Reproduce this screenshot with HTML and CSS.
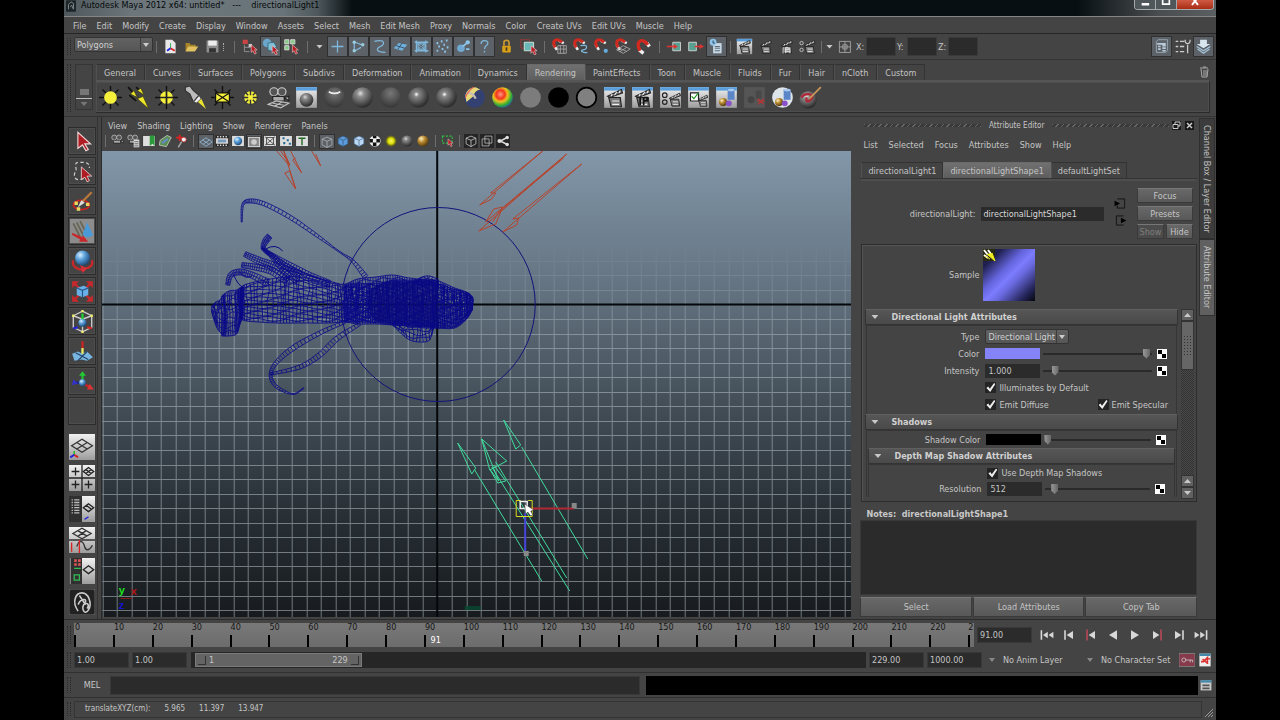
FILE: index.html
```html
<!DOCTYPE html>
<html lang="en">
<head>
<meta charset="utf-8">
<title>Autodesk Maya 2012 x64: untitled*</title>
<link rel="stylesheet" href="styles.css">
</head>
<body>
<svg class="defs" aria-hidden="true">
  <defs>
    <radialGradient id="gGray" cx=".4" cy=".3" r=".7"><stop offset="0" stop-color="#ddd"/><stop offset=".25" stop-color="#8c8c8c"/><stop offset="1" stop-color="#2a2a2a"/></radialGradient>
    <radialGradient id="gFlat" cx=".5" cy=".3" r=".8"><stop offset="0" stop-color="#777"/><stop offset="1" stop-color="#2c2c2c"/></radialGradient>
    <radialGradient id="gSpot" cx=".4" cy=".35" r=".6"><stop offset="0" stop-color="#fff"/><stop offset=".2" stop-color="#888"/><stop offset="1" stop-color="#303030"/></radialGradient>
    <radialGradient id="gRamp" cx=".4" cy=".35" r=".7"><stop offset="0" stop-color="#ff9a80"/><stop offset=".3" stop-color="#f4341c"/><stop offset=".5" stop-color="#f0c020"/><stop offset=".75" stop-color="#35b030"/><stop offset="1" stop-color="#2050b0"/></radialGradient>
    <radialGradient id="gBlue" cx=".35" cy=".3" r=".8"><stop offset="0" stop-color="#d8f0ff"/><stop offset=".4" stop-color="#5a9fd8"/><stop offset="1" stop-color="#123a68"/></radialGradient>
    <radialGradient id="gGold" cx=".35" cy=".3" r=".8"><stop offset="0" stop-color="#fff0c0"/><stop offset=".4" stop-color="#b88a30"/><stop offset="1" stop-color="#3c2808"/></radialGradient>
    <radialGradient id="gYel"><stop offset="0" stop-color="#f8f860"/><stop offset=".5" stop-color="#d8d800"/><stop offset="1" stop-color="#555500" stop-opacity="0"/></radialGradient>
    <linearGradient id="gSky" x2="0" y2="1"><stop offset="0" stop-color="#8297a9"/><stop offset=".3" stop-color="#637280"/><stop offset=".55" stop-color="#424d56"/><stop offset=".8" stop-color="#262d33"/><stop offset="1" stop-color="#171b1e"/></linearGradient>
    <linearGradient id="gFade" gradientUnits="userSpaceOnUse" x1="0" y1="240" x2="0" y2="340"><stop offset="0" stop-color="#fff" stop-opacity="0"/><stop offset=".4" stop-color="#fff" stop-opacity=".4"/><stop offset="1" stop-color="#fff"/></linearGradient>
    <mask id="mFade" maskUnits="userSpaceOnUse" x="-200" y="0" width="1500" height="800"><rect x="-200" y="0" width="1500" height="800" fill="url(#gFade)"/></mask>
    <linearGradient id="gBtn" x2="0" y2="1"><stop offset="0" stop-color="#f2f2f2"/><stop offset="1" stop-color="#9c9c9c"/></linearGradient>
  </defs>
</svg>
<div class="app">
  <header class="title">
    <svg class="logo" viewBox="0 0 12 14" aria-hidden="true"><rect width="12" height="14" rx="1" fill="#1d2528"/><path d="M3 11V5l3-3 3 2v7M5 8l2-2 1 4" fill="none" stroke="#89969b"/></svg>
    <h1>Autodesk Maya 2012 x64: untitled* &nbsp; --- &nbsp;&nbsp; directionalLight1</h1>
    <div class="winctl"><button aria-label="Minimize"><svg viewBox="0 0 24 10"><path d="M8 4h9" stroke="#fff" stroke-width="3"/></svg></button><button aria-label="Maximize"><svg viewBox="0 0 24 10"><path d="M8-3h8v7H8z" fill="none" stroke="#fff" stroke-width="2"/></svg></button><button class="x" aria-label="Close"><svg viewBox="0 0 36 10"><path d="M15-3l6 8m0-8l-6 8" stroke="#fff" stroke-width="2"/></svg></button></div>
  </header>
  <nav class="menu main-menu"><button>File</button><button>Edit</button><button>Modify</button><button>Create</button><button>Display</button><button>Window</button><button>Assets</button><button>Select</button><button>Mesh</button><button>Edit Mesh</button><button>Proxy</button><button>Normals</button><button>Color</button><button>Create UVs</button><button>Edit UVs</button><button>Muscle</button><button>Help</button></nav>

  <section class="status-line">
    <span class="grip"></span>
    <span class="pick mode"><select aria-label="Menu set"><option>Polygons</option></select></span>
    <div class="icons" data-icons="sepn new open save chev sep selHier *selObj selComp sep tri *plus *joints *curve *surf *lattice *dots *rend *help gap lock gap hilite sep magGrid magCurve magPoint magPlane mag sep inConn outConn *history sepn renderView clap ipr rset sepn trin cross"></div>
    <label for="cx">X:</label><input id="cx" class="coord"><label for="cy">Y:</label><input id="cy" class="coord"><label for="cz">Z:</label><input id="cz" class="coord">
    <div class="icons push" data-icons="*attrPanel toolPanel *chanPanel"></div>
  </section>

  <section class="shelf">
    <span class="grip"></span>
    <div class="shelf-side"><i class="box"></i><i class="line"></i><i class="down"></i></div>
    <div class="shelf-body">
      <div class="tabs shelf-tabs"><button>General</button><button>Curves</button><button>Surfaces</button><button>Polygons</button><button>Subdivs</button><button>Deformation</button><button>Animation</button><button>Dynamics</button><button class="on">Rendering</button><button>PaintEffects</button><button>Toon</button><button>Muscle</button><button>Fluids</button><button>Fur</button><button>Hair</button><button>nCloth</button><button>Custom</button>
        <button class="trash" aria-label="Delete"><svg viewBox="0 0 12 14"><path d="M2 3h8M5 2h3M3 4l1 8h5l1-8M6 5v6M8 5v6" fill="none" stroke="#aaa"/></svg></button></div>
      <div class="icons shelf-icons" data-icons="sun dirLight pointLight spot area volume camera renderBall aniso blinn lambert phong phong layered ramp surfShader black useBg clapW iprW rsetW batchW hyper dimmed hyperRound paint"></div>
    </div>
  </section>

  <main>
    <aside class="toolbox">
      <div class="tools" data-icons="arrow lasso brush +move rotate scale manip soft axes blank"></div>
      <div class="layouts" data-icons="persp four outl graph hyperP mel"></div>
    </aside>

    <section class="panel">
      <nav class="menu"><button>View</button><button>Shading</button><button>Lighting</button><button>Show</button><button>Renderer</button><button>Panels</button></nav>
      <div class="icons panel-icons" data-icons="sepn cam camAttr bookmark imgPlane pan sep *gridI film ballBox *gate xbox pts tbox sep *wire cubeB cubeW checker yel gray gold sep selGreen sepn cubeO twoBox share"></div>
      <svg id="scene" class="scene" viewBox="102 151 750 466" preserveAspectRatio="xMidYMid slice" role="img" aria-label="Perspective view"></svg>
    </section>

    <section class="attr">
      <div class="dock"><i></i><h2>Attribute Editor</h2><i></i>
        <button aria-label="Undock"><svg viewBox="0 0 9 9"><path d="M3 3V1h5v4H6M1 3.500h5v4H1z" fill="none" stroke="#ccc"/></svg></button><button aria-label="Close"><svg viewBox="0 0 9 9"><path d="M2 2l5 5m0-5L2 7" stroke="#ccc" stroke-width="1.500"/></svg></button></div>
      <nav class="menu"><button>List</button><button>Selected</button><button>Focus</button><button>Attributes</button><button>Show</button><button>Help</button></nav>
      <div class="tabs attr-tabs"><button>directionalLight1</button><button class="on">directionalLightShape1</button><button>defaultLightSet</button></div>
      <div class="node">
        <label for="nm">directionalLight:</label><input id="nm" value="directionalLightShape1">
        <div class="conn"><button aria-label="Input connection"><svg viewBox="0 0 13 12"><path d="M3 1h8v10H3V8" fill="none" stroke="#111"/><path d="M0 3l6 3-6 3z" fill="#000"/></svg></button><button aria-label="Output connection"><svg viewBox="0 0 13 12"><path d="M10 1H2v10h8" fill="none" stroke="#111"/><path d="M7 3l6 3-6 3z" fill="#000"/></svg></button></div>
        <div class="node-btns"><button class="btn">Focus</button><button class="btn">Presets</button><button class="btn" disabled>Show</button><button class="btn">Hide</button></div>
      </div>
      <div class="frame">
        <div class="sample"><span>Sample</span><div class="swatch"><svg viewBox="0 0 14 14"><path d="M0 0h12v12H0z" fill="#2a2a10"/><path d="M1 1l4 5M5 1l3 4M1 6l4 3" stroke="#fff" stroke-width="2"/><path d="M4 5l8 7-3-8M2 7l5 3" fill="#ee2" stroke="#ee2"/></svg></div></div>
        <div class="scroller">
          <div class="sections">
            <h3><i class="down"></i>Directional Light Attributes</h3>
            <div class="body">
              <div class="row"><label for="ty">Type</label><span class="pick type"><select id="ty"><option>Directional Light</option></select></span></div>
              <div class="row"><label for="co">Color</label><span class="chip blue"></span><input id="co" type="range" value="98"><button class="map" aria-label="Map color"></button></div>
              <div class="row"><label for="it">Intensity</label><input id="it" class="num" value="1.000"><input type="range" value="8" aria-label="Intensity slider"><button class="map" aria-label="Map intensity"></button></div>
              <div class="row"><label class="chk"><input type="checkbox" checked>Illuminates by Default</label></div>
              <div class="row"><label class="chk"><input type="checkbox" checked>Emit Diffuse</label><label class="chk second"><input type="checkbox" checked>Emit Specular</label></div>
            </div>
            <h3><i class="down"></i>Shadows</h3>
            <div class="body shadows">
              <div class="row"><label for="sc">Shadow Color</label><span class="chip"></span><input id="sc" type="range" value="0"><button class="map" aria-label="Map shadow color"></button></div>
              <h3><i class="down"></i>Depth Map Shadow Attributes</h3>
              <div class="body last">
                <div class="row"><label class="chk"><input type="checkbox" checked>Use Depth Map Shadows</label></div>
                <div class="row"><label for="rs">Resolution</label><input id="rs" class="num" value="512"><input type="range" value="6" aria-label="Resolution slider"><button class="map" aria-label="Map resolution"></button></div>
              </div>
            </div>
          </div>
          <div class="scroll"><button aria-label="Up"><i class="up"></i></button><span class="thumb"></span><span class="track"></span><button aria-label="Page up"><i class="up"></i></button><button aria-label="Down"><i class="down"></i></button></div>
        </div>
      </div>
      <label class="notes" for="nt">Notes:&nbsp; directionalLightShape1</label>
      <textarea id="nt"></textarea>
      <div class="foot"><button class="btn">Select</button><button class="btn">Load Attributes</button><button class="btn">Copy Tab</button></div>
    </section>
    <aside class="vtabs"><button>Channel Box / Layer Editor</button><button class="on">Attribute Editor</button></aside>
  </main>

  <section class="timeline">
    <span class="grip"></span>
    <div class="ruler" id="ruler"></div>
    <input class="dark now" value="91.00" aria-label="Current time">
    <div class="play" data-icons="p1 p2 p3 p4 p5 p6 p7 p8"></div>
  </section>
  <section class="range">
    <span class="grip"></span>
    <input class="dark" value="1.00" aria-label="Animation start"><input class="dark" value="1.00" aria-label="Range start">
    <div class="bar"><div class="handle"><i></i><span>1</span><span>229</span><i></i></div></div>
    <input class="dark" value="229.00" aria-label="Range end"><input class="dark" value="1000.00" aria-label="Animation end">
    <button class="drop"><i class="down"></i>No Anim Layer</button><button class="drop set"><i class="down"></i>No Character Set</button>
    <div class="icons" data-icons="key prefs"></div>
  </section>
  <section class="cmd"><span class="grip"></span><label for="mel">MEL</label><input id="mel" class="dark"><output></output><div class="icons" data-icons="script"></div></section>
  <footer><span class="grip"></span><p><span>translateXYZ(cm):</span><span>5.965</span><span>11.397</span><span>13.947</span></p><svg viewBox="0 0 10 10"><path d="M1 9l8-8M4 9l5-5M7 9l2-2" stroke="#999"/></svg></footer>
</div>
<script src="script.js"></script>
</body>
</html>
```
FILE: styles.css
```css
* { box-sizing: border-box; }
body { margin: 0; background: #000; color: #c4c4c4; font: 9px/12px "DejaVu Sans Condensed", "DejaVu Sans", sans-serif; }
button, input, select, textarea { font: inherit; color: inherit; margin: 0; padding: 0; border: 0; background: none; border-radius: 0; min-width: 0; }
button { white-space: nowrap; }
h1, h2, h3, p { margin: 0; font-size: inherit; font-weight: normal; }
.defs { position: absolute; width: 0; height: 0; }
svg { display: block; flex: none; }
.app { margin: 0 5%; min-height: 100vh; background: #444; display: flex; flex-direction: column; overflow: hidden; }

.title { display: flex; align-items: center; height: 17px; padding: 0 2px 5px; border-bottom: 1px solid #858585; color: #05090b;
  background: linear-gradient(90deg, #4e575b 0, #6d777b 6%, #69747a 19%, #4f595d 22%, #070f12 25%, #070f12 88%, #4a4d50 95%, #5a5f62 100%); }
.title h1 { font: 9px/11px "DejaVu Sans Condensed", "DejaVu Sans", sans-serif; white-space: pre; }
.logo { width: 10px; height: 12px; margin-right: 5px; }
.winctl { display: flex; margin-left: auto; height: 10px; align-self: flex-start; border: 1px solid #a4a9ac; border-top: 0; border-radius: 0 0 4px 4px; overflow: hidden; }
.winctl button { width: 21px; background: #50575b; border-right: 1px solid #a4a9ac; }
.winctl .x { width: 36px; background: linear-gradient(#d05a44, #a82c14); border: 0; }
.winctl svg { height: 10px; width: 100%; }

.menu { display: flex; gap: 10px; align-items: center; }
.main-menu { height: 17px; padding: 1px 9px 0; border-bottom: 1px solid #262626; }
.grip { flex: none; width: 4px; align-self: stretch; margin: 4px 3px; border: dotted #2a2a2a; border-width: 0 1px; }
.icons { display: flex; align-items: center; }
.icons button, .tools button, .layouts button, .play button { display: grid; place-items: center; flex: none; }
.icons svg { width: 17px; height: 17px; }
.pick { position: relative; display: flex; border: 1px solid #333; border-radius: 2px; background: linear-gradient(#626262, #565656); }
.pick select { appearance: none; width: 100%; padding-left: 2px; color: #d0d0d0; }
.pick::after { content: ""; position: absolute; right: 3px; top: 50%; margin-top: -2px; border: 3px solid transparent; border-top: 4px solid #ccc; border-bottom: 0; pointer-events: none; }
.pick::before { content: ""; position: absolute; right: 11px; top: 0; bottom: 0; border-left: 1px solid #3c3c3c; }

.status-line { display: flex; align-items: center; height: 26px; border-bottom: 1px solid #353535; }
.mode { width: 79px; height: 15px; margin-bottom: 4px; }
.status-line .icons button { width: 21px; height: 21px; }
.icons .sep { width: 10px; height: 12px; background: linear-gradient(#8a8a8a, #8a8a8a) center / 1px 100% no-repeat; flex: none; opacity: .6; }
.icons .narrow { width: 7px; }
.icons .tri { width: 15px; flex: none; display: grid; justify-items: center; }
.icons .tri.small { width: 9px; }
.icons .chev { width: 6px; height: 8px; flex: none; border-left: 1px dotted #aaa; }
.icons .gap { width: 1px; }
.icons .on { background: #5c6267; border: 1px solid #303030; }
.status-line label { margin-left: 1px; width: 10px; }
.coord { flex: 0 1 30px; width: 30px; height: 19px; background: #2b2b2b; border: 1px solid #3a3a3a; }
.push { margin-left: auto; padding-right: 2px; }

.shelf { display: flex; height: 57px; border-bottom: 1px solid #333; }
.shelf-side { width: 18px; margin: 4px 3px 6px 1px; border: 1px solid #353535; display: flex; flex-direction: column; align-items: center; justify-content: flex-end; gap: 3px; padding-bottom: 3px; }
.shelf-side .box { width: 9px; height: 6px; background: #777; }
.shelf-side .line { width: 16px; height: 1px; background: #bbb; }
.down, .up { display: block; width: 7px; height: 4px; background: #c8c8c8; clip-path: polygon(0 0, 100% 0, 50% 100%); }
.up { clip-path: polygon(50% 0, 100% 100%, 0 100%); }
.shelf-side .down { background: #777; }
.shelf-body { flex: 1; min-width: 0; padding: 4px 6px 0 0; }
.tabs { display: flex; align-items: stretch; }
.tabs button { border: 1px solid #333; border-left-color: #505050; border-bottom: 0; background: #434343; padding: 0 6px; }
.tabs .on { background: linear-gradient(#707070, #5e5e5e); border-color: #6a6a6a; }
.shelf-tabs { height: 16px; }
.shelf-tabs button { padding: 0 8px 0 7px; flex: 0 1 auto; }
.shelf-tabs .trash { margin-left: auto; background: none; border: 0; padding: 0; }
.trash svg { width: 12px; height: 14px; }
.shelf-icons { height: 33px; border: 1px solid #2b2b2b; border-left-width: 0; border-top: 2px solid #555; box-shadow: inset 0 0 0 1px #4e4e4e; }
.shelf-icons button { width: 28px; }
.shelf-icons svg { width: 23px; height: 23px; }

main { flex: 1; display: flex; min-height: 0; border-bottom: 1px solid #2b2b2b; }
.toolbox { width: 34px; padding: 10px 2px 0 4px; display: flex; flex-direction: column; gap: 8px; margin-right: 3px; border-right: 1px solid #333; }
.tools { display: flex; flex-direction: column; gap: 2px; }
.tools button { width: 28px; height: 28px; border: 1px solid #2c2c2c; box-shadow: inset 0 0 0 1px #4d4d4d; }
.tools .hot { background: #8c8c8c; }
.tools svg { width: 23px; height: 23px; }
.layouts { display: flex; flex-direction: column; gap: 4px; }
.layouts button { width: 28px; height: 27px; }
.layouts svg { width: 26px; height: 26px; }

.panel { flex: 1; min-width: 0; display: flex; flex-direction: column; padding: 1px 0 2px; border-left: 1px solid #2b2b2b; }
.panel .menu { height: 15px; padding: 0 6px; }
.panel-icons { height: 18px; padding-bottom: 2px; }
.panel-icons button { width: 16px; height: 15px; }
.panel-icons svg { width: 14px; height: 14px; }
.panel-icons .sep { width: 9px; }
.panel-icons .narrow { width: 7px; }
.scene { flex: 1 1 0; width: 100%; height: 0; min-height: 0; }
.scene text { font: bold 11px/11px "Liberation Sans", sans-serif; }

.attr { width: 30%; flex: none; padding: 0 0 2px 9px; display: flex; flex-direction: column; }
.dock { display: flex; align-items: center; gap: 8px; height: 17px; padding-left: 4px; font-size: 8px; }
.dock i { flex: 1; height: 3px; background: repeating-linear-gradient(135deg, #666 0 1px, #3a3a3a 1px 4px); }
.dock button { width: 9px; height: 9px; background: #181818; margin-left: -5px; }
.dock button + button { margin: 0 3px 0 -4px; }
.attr > .menu { height: 21px; padding-left: 3px; gap: 11px; }
.attr-tabs { height: 24px; padding: 7px 0 0 1px; border-bottom: 1px solid #333; box-shadow: 0 3px 0 -1px #4e4e4e; }
.attr-tabs button { flex: none; }
.node { display: flex; align-items: center; height: 65px; padding: 7px 4px 3px 0; }
.node label { width: 115px; text-align: right; }
.node input { flex: 1; margin: 0 10px 0 6px; height: 14px; background: #2b2b2b; padding-left: 2px; color: #d8d8d8; }
.conn { display: grid; gap: 6px; margin-bottom: 3px; }
.conn svg { width: 13px; height: 11px; }
.node-btns { display: grid; grid-template-columns: 1fr 1fr; gap: 3px 2px; width: 56px; margin-left: 10px; }
.node-btns .btn { height: 15px; }
.node-btns .btn:nth-child(-n+2) { grid-column: span 2; }
.btn { background: linear-gradient(#686868, #585858); border: 1px solid #3a3a3a; border-top-color: #777; }
.btn:disabled { color: #7e7e7e; background: #4c4c4c; }
.frame { flex: 1; min-height: 0; margin-left: 1px; border: 1px solid #2c2c2c; box-shadow: inset 1px 1px 0 #555; display: flex; flex-direction: column; padding: 4px 2px 2px 3px; }
.sample { display: flex; align-items: center; gap: 4px; height: 60px; padding-bottom: 8px; }
.sample span { width: 114px; text-align: right; }
.swatch { width: 52px; height: 52px; background: linear-gradient(315deg, #05060d 0, #25265a 15%, #6a6ae0 38%, #7c7cff 48%, #6464dc 60%, #1f2050 82%, #1a1b45 100%); }
.swatch svg { width: 14px; height: 14px; }
.scroller { flex: 1; min-height: 0; display: flex; gap: 3px; }
.sections { flex: 1; min-width: 0; overflow: hidden; }
h3 { display: flex; align-items: center; height: 16px; font-weight: bold; color: #d0d0d0; background: linear-gradient(#565656, #4a4a4a); border: 1px solid #333; border-top-color: #606060; padding-left: 5px; gap: 13px; }
.body { border: 1px solid #363636; border-bottom: 0; margin: 0 1px; padding: 2px 0 1px; }
.row { display: flex; align-items: center; height: 17px; }
.row > label:first-child:not(.chk) { width: 112px; text-align: right; margin-right: 6px; flex: none; }
.type { width: 84px; height: 15px; }
.chip { width: 55px; height: 11px; background: #000; flex: none; }
.blue { background: #8484f8; }
.num { width: 55px; height: 14px; background: #2b2b2b; padding-left: 3px; flex: none; }
.row input[type=range] { appearance: none; flex: 1; margin: 0 5px 0 3px; height: 11px; background: linear-gradient(#2a2a2a, #2a2a2a) center / 100% 2px no-repeat; }
input[type=range]::-webkit-slider-thumb { appearance: none; width: 7px; height: 10px; background: linear-gradient(90deg, #999, #666); clip-path: polygon(0 0, 100% 0, 100% 65%, 50% 100%, 0 65%); }
.map { width: 10px; height: 10px; margin-right: 9px; flex: none; background: conic-gradient(#fff 25%, #000 0 50%, #fff 0 75%, #000 0) 0 0 / 100% 100%; border: 1px solid #fff; }
.chk { display: flex; align-items: center; gap: 3px; padding-left: 118px; }
.chk.second { padding-left: 0; margin: 0 8px 0 auto; }
.chk input { appearance: none; width: 11px; height: 11px; background: #242424; }
.chk input:checked::before { content: ""; display: block; width: 9px; height: 9px; margin: 1px; background: #eee; clip-path: polygon(0 55%, 20% 40%, 38% 65%, 85% 0, 100% 12%, 42% 100%); }
.shadows { padding: 0 1px; }
.last { margin: 0; padding: 0; }
.last .row { height: 16px; }
.scroll { width: 13px; display: flex; flex-direction: column; background: #3a3a3a; }
.scroll button { height: 12px; display: grid; place-items: center; background: #616161; border: 1px solid #333; }
.thumb { height: 49px; border: 1px solid #333; background: radial-gradient(#333 1px, transparent 1px) center / 3px 3px content-box, #666; padding: 14px 1px; background-clip: content-box, border-box; }
.track { flex: 1; background: repeating-conic-gradient(#333 0 25%, #484848 0 50%) 0 0 / 2px 2px; }
.notes { font-weight: bold; padding: 7px 0 0 6px; height: 18px; color: #c8c8c8; line-height: 11px; }
textarea { height: 75px; background: #2b2b2b; resize: none; border: 1px solid #383838; }
.foot { display: grid; grid-template-columns: 1fr 1fr 1fr; gap: 1px; margin-top: 2px; }
.foot .btn { height: 20px; }
.vtabs { width: 19px; flex: none; padding: 1px 0 0 2px; display: flex; flex-direction: column; }
.vtabs button { writing-mode: vertical-rl; width: 16px; height: 121px; border: 1px solid #2f2f2f; background: #3c3c3c; }
.vtabs .on { background: #606060; height: 77px; }

.timeline { display: flex; height: 28px; align-items: center; padding-top: 2px; }
.ruler { flex: 1; display: flex; height: 24px; background: linear-gradient(#787878, #6c6c6c); color: #161616; position: relative; }
.ruler span { flex: 1; min-width: 0; line-height: 9px; padding-left: 1px; background: linear-gradient(#000, #000) 0 100% / 2px 12px no-repeat; }
.ruler span:last-of-type { flex: 0 0 6px; padding: 0; }
.ruler b { position: absolute; top: 12px; margin-left: 2px; line-height: 10px; color: #fff; font-weight: normal; }
.dark { background: #2b2b2b; border: 1px solid #383838; padding-left: 2px; height: 16px; }
.now { width: 55px; margin: 0 4px 0 3px; }
.play { display: flex; padding-right: 4px; }
.play button { width: 22px; height: 20px; }
.play svg { width: 16px; height: 16px; }
.range { display: flex; height: 25px; align-items: center; border-bottom: 1px solid #303030; }
.range .dark { width: 55px; margin-right: 3px; }
.bar { flex: 1; background: #262626; height: 16px; margin: 0 3px 0 1px; padding: 1px 4px; }
.handle { width: 25%; height: 14px; background: #646464; border: 1px solid #7a7a7a; display: flex; align-items: center; padding: 0 2px; gap: 3px; }
.handle i { width: 8px; height: 9px; border: solid #333; border-width: 0 1px 1px 0; }
.handle span + span { margin-left: auto; }
.drop { display: flex; align-items: center; gap: 8px; width: 98px; padding-left: 4px; }
.drop .down { background: #888; width: 6px; }
.drop.set { width: 95px; }
.range .icons, .cmd .icons { padding-right: 2px; }
.range .icons button { width: 18px; }
.range .icons svg { width: 16px; height: 16px; }
.cmd { display: flex; height: 25px; align-items: center; border-bottom: 1px solid #303030; }
.cmd label { width: 36px; text-align: center; }
.cmd .dark { flex: 1 1 0; height: 19px; }
.cmd output { flex: 1 1 26px; height: 19px; margin-left: 6px; background: #000; }
.cmd .icons button { width: 16px; }
.cmd .icons svg { width: 12px; height: 14px; }
footer { display: flex; height: 22px; align-items: center; font-size: 8px; }
footer p { flex: 1; display: flex; gap: 14px; padding-left: 10px; height: 17px; align-items: center; border: 1px solid #343434; }
footer svg { width: 10px; height: 10px; align-self: flex-end; margin: 0 2px 2px; }
```
FILE: script.js
```js
const star = '<path d="M10 0v20M0 10h20M3 3l14 14M17 3L3 17" stroke="#111" stroke-width="1.200"/>';
const page = '<rect x="1" y="1" width="18" height="18" fill="url(#gBtn)"/><rect x="1" y="1" width="18" height="3" fill="#5a9fdc"/>';
const clap = '<path d="M4 9L16 3l1 3L6 10zM5 10h10l1 8H7z" fill="#777" stroke="#222"/><path d="M7 9l1-2M10 8l2-3M14 6l1-2M8 13h6M8 16h6" stroke="#eee"/>';
const ball = (g, r = 8) => `<circle cx="10" cy="10" r="${r}" fill="url(#${g})"/>`;
const ptr = (x, y) => `<path d="M${x} ${y}v9l2-2 2 4 2-1-2-4h3z" fill="#b81c24" stroke="#f0d0d0" stroke-width=".7"/>`;
const magnet = '<path d="M3 8l4 6M9 3l6 3" stroke="#eee" stroke-width="3"/><path d="M5 11C0 3 7-1 13 5" fill="none" stroke="#d02a20" stroke-width="3.500"/>';
const blue = (d) => `<path d="${d}" fill="none" stroke="#7fb8dc" stroke-width="1.500"/>`;
const grid = '<path d="M2 9l8-5 8 5-8 5zM6 6.500l8 5M14 6.500l-8 5" fill="none" stroke="#333"/>';
const tripod = '<path d="M4 16v-3" stroke="#1b1"/><path d="M4 16l3 2" stroke="#d22" stroke-width="1.500"/><path d="M4 16l-3 2" stroke="#22d" stroke-width="1.500"/>';
const cube = (f, s) => `<path d="M3 6l7-3 7 3v8l-7 4-7-4z" fill="${f}" stroke="${s}"/><path d="M3 6l7 3 7-3M10 9v9" fill="none" stroke="${s}"/>`;
const cam = '<circle cx="6" cy="5" r="3.500" fill="#555" stroke="#ccc"/><circle cx="13" cy="5" r="3.500" fill="#555" stroke="#ccc"/><path d="M5 9h10v4H5zM15 10l4-1v4z" fill="#aaa" stroke="#222"/>';
const tile = '<rect x="1" y="2" width="18" height="16" fill="#ddd" stroke="#222"/>';
const shapes = '<circle cx="7" cy="14" r="3.500" fill="url(#gGold)"/><path d="M11 3h6v9h-6z" fill="#5a86c8"/><ellipse cx="14" cy="3.500" rx="3" ry="1.200" fill="#a8c8f0"/><circle cx="12" cy="15" r="2.500" fill="#8a50c8"/>';
const P = (d) => `<path d="${d}" fill="#d8d8d8"/>`;

const icons = {
  new: '<path d="M4 2h8l4 4v12H4z" fill="#e8e8e8"/><path d="M10 12V6" stroke="#2a4"/><path d="M10 12l5 3" stroke="#d22" stroke-width="2"/><path d="M10 12l-4 3" stroke="#22d" stroke-width="2"/>',
  open: '<path d="M3 16V6h5l1 2h6v2" fill="#a88428"/><path d="M3 16l3-6h12l-4 6z" fill="#e0c060"/>',
  save: '<path d="M3 3h14v14H3z" fill="#8e8e8e"/><path d="M5 3h10v6H5z" fill="#eee"/><path d="M6 12h8v5H6z" fill="#333"/>',
  selHier: '<path d="M2 2h6v5H2z" fill="#c44"/><path d="M4 8v8h6M4 11h6" fill="none" stroke="#999"/><path d="M9 7h4v4H9z" fill="#ccc"/>' + ptr(12, 8),
  selObj: '<circle cx="6" cy="6" r="5" fill="#6aa6cc"/><path d="M7 6l7-1 3 5-4 6-6-2z" fill="#7fc0d8" stroke="#367"/>' + ptr(12, 9),
  selComp: '<path d="M2 2h5v5H2zM9 2h5v5H9zM2 9h5v5H2z" fill="#8c8" stroke="#ddd"/>' + ptr(11, 8),
  plus: blue('M10 3v14M3 10h14'),
  joints: blue('M5 5v10M6 5l8 3M6 15l7-4') + '<circle cx="5" cy="5" r="2" fill="#9cd"/><circle cx="5" cy="15" r="2" fill="#9cd"/><circle cx="15" cy="8" r="2" fill="#9cd"/>',
  curve: blue('M4 4c14-3 12 4 7 6s-6 7 6 7'),
  surf: '<path d="M2 12l6-6 10 2-6 7z" fill="#6fb0dc"/><path d="M5 9l10 3M12 6l-5 7" stroke="#345"/>',
  lattice: blue('M4 3v14M15 3v14M2 5h16M2 15h16M6 7h7v6H6z') + '<path d="M4 5l5 5M15 5l-5 5M4 15l5-5M15 15l-5-5" stroke="#7fb8dc"/>',
  dots: '<path d="M3 6h2M8 4h2M14 3h2M5 10h2M11 8h2M3 15h2M9 13h2M15 11h2M12 16h2" stroke="#8cc4e8" stroke-width="2.500"/>',
  rend: '<circle cx="7" cy="12" r="4.500" fill="#6fa8d0"/><circle cx="15" cy="5" r="2.500" fill="#8cc4e8"/><path d="M9 10l5-4M13 13h4" stroke="#8cc4e8" stroke-width="2"/>',
  help: blue('M6 7c0-5 8-5 8-1 0 3-4 3-4 7M10 15v2'),
  lock: '<rect x="5" y="9" width="10" height="8" rx="1" fill="#d8a018"/><path d="M7 9V5c0-3 6-3 6 0v4" fill="none" stroke="#c89830" stroke-width="2"/><path d="M10 11v4" stroke="#432" stroke-width="2"/>',
  hilite: '<path d="M1 2h10v10H1z" fill="none" stroke="#c33" stroke-dasharray="2 1"/><path d="M5 5h11v10H5z" fill="#69b7b7" stroke="#ded"/>' + ptr(13, 9),
  magGrid: magnet + '<path d="M8 9h10v9H8zM11 9v9M15 9v9M8 13h10" fill="none" stroke="#aaa"/>',
  magCurve: magnet + blue('M10 9c10-2 8 4 3 5s1 4 5 3'),
  magPoint: magnet + '<circle cx="15" cy="15" r="2.500" fill="#6ad"/>',
  magPlane: magnet + '<path d="M3 14l8-5 8 4-8 5zM7 12l8 4M15 11l-8 5" fill="none" stroke="#aaa"/>',
  mag: '<path d="M5 14l5 4M14 6l3 4" stroke="#eee" stroke-width="4"/><path d="M6 15C-1 3 10-1 15 8" fill="none" stroke="#d02a20" stroke-width="4"/>',
  inConn: '<path d="M8 5h9v10H8z" fill="#58a090" stroke="#ddd"/><path d="M1 9h8V7l5 3-5 3v-2H1z" fill="#d33"/>',
  outConn: '<path d="M2 5h9v10H2z" fill="#58a090" stroke="#ddd"/><path d="M9 9h6V7l5 3-5 3v-2H9z" fill="#d33"/>',
  history: '<path d="M6 6h10v12H6z" fill="#c8d8e4"/><path d="M8 10h6M8 12h6M8 15h6" stroke="#456"/><circle cx="6" cy="5" r="4" fill="#8cc4e8"/><path d="M6 3v3h2" stroke="#234" fill="none"/>',
  renderView: page + clap, clap, ipr: clap + '<path d="M6 11v7M9 11v7M9 11h3v3H9M14 11v7" fill="none" stroke="#eee"/>',
  rset: '<g transform="translate(2)">' + clap + '</g><circle cx="3" cy="6" r="2" fill="none" stroke="#ccc"/><circle cx="3" cy="14" r="2" fill="none" stroke="#ccc"/>',
  cross: '<path d="M4 4h13v13H4zM10.500 4v13M4 10.500h13M8 8h5v5H8z" fill="none" stroke="#aaa"/>',
  attrPanel: '<path d="M4 4l2-2h11v13l-2 2H4z" fill="none" stroke="#9ab"/><path d="M5 7h10M6 10h3M6 13h3M11 9h4M11 12h4M11 15h4" stroke="#bcd" stroke-width="2"/>',
  toolPanel: '<path d="M2 4h3M7 4h5M2 10h3M7 10h5M2 16h3M7 16h5M16 8v10M13 2c0 6 6 6 6 0" fill="none" stroke="#ccc" stroke-width="1.500"/>',
  chanPanel: '<path d="M6 2h8v5h4l-8 5-8-5h4z" fill="#d8e4ee"/><path d="M2 10l8 5 8-5M3 13l7 5 7-5" fill="none" stroke="#a8c4d8" stroke-width="1.500"/>',

  sun: star + '<circle cx="10" cy="10" r="5.500" fill="#f6f03c"/>',
  dirLight: '<path d="M1 1l7 8M8 1l5 5M2 8l6 5" stroke="#111" stroke-width="1.500"/><path d="M3 7l6 3-3-6zM9 4l6 4-3-6zM9 11l10 9-5-11z" fill="#eee62a" stroke="#331" stroke-width=".6"/>',
  pointLight: star + '<circle cx="10" cy="10" r="5.500" fill="#f6f03c"/><path d="M10 4v12M4 10h12" stroke="#222" stroke-width="1.500"/>',
  spot: '<path d="M2 1l4-1 3 4 5 4-5 6-3-7-4-3z" fill="#bbb" stroke="#333"/><path d="M9 14l5-6 2 3-4 4z" fill="#eee" stroke="#444"/><path d="M13 14l3-3 4 9z" fill="#e8e030"/>',
  area: star + '<path d="M4 6h12v8H4z" fill="#f6f03c" stroke="#111"/><path d="M4 6l12 8M16 6L4 14" stroke="#111"/>',
  volume: '<circle cx="10" cy="10" r="5.500" fill="#f6f03c"/><path d="M10 3v5M10 12v5M3 10h5M12 10h5M5 5l3 3M15 5l-3 3M5 15l3-3M15 15l-3-3" stroke="#333" stroke-width="1.200"/>',
  camera: cam + '<path d="M1 16l7-3 11 2-7 4zM5 15l11 2M13 14l-7 4" fill="none" stroke="#bbb"/>',
  renderBall: page + '<circle cx="10" cy="12" r="6" fill="url(#gGray)"/>',
  aniso: ball('gFlat', 9) + '<path d="M5 5q5 3 10 0" fill="none" stroke="#eee" stroke-width="1.500"/>',
  blinn: ball('gGray', 9), lambert: ball('gFlat', 9), phong: ball('gSpot', 9),
  layered: '<circle cx="10" cy="10" r="9" fill="#334072"/><path d="M2 8Q4 1 11 1l4 2Q10 4 9 9L3 14z" fill="#e8d878"/><path d="M4 6q5 0 7 5" fill="none" stroke="#c8c0b8" stroke-width="2"/><path d="M9 1Q4 5 2 10" fill="none" stroke="#d55"/>',
  ramp: ball('gRamp', 9),
  surfShader: '<circle cx="10" cy="10" r="9" fill="#7c7c7c"/>', black: '<circle cx="10" cy="10" r="9" fill="#000"/>',
  useBg: '<circle cx="10" cy="10" r="8.500" fill="#808080" stroke="#000" stroke-width="1.500"/>',
  clapW: page + clap, iprW: page + clap + '<path d="M8 10v7M11 10v7M11 10h3v3h-3" fill="none" stroke="#111" stroke-width="1.500"/>',
  rsetW: page + '<g transform="translate(6 4) scale(.75)">' + clap + '</g><circle cx="5" cy="8" r="2" fill="none" stroke="#222"/><circle cx="5" cy="14" r="2" fill="none" stroke="#222"/>',
  batchW: page + '<g transform="translate(7 6) scale(.65)">' + clap + '</g><path d="M3 6h7v7H3z" fill="#fff" stroke="#222"/><path d="M4 9l2 2 4-5" fill="none" stroke="#292"/>',
  hyper: page + shapes, dimmed: '<rect x="1" y="1" width="18" height="18" fill="#555"/><circle cx="7" cy="12" r="3" fill="#444"/><path d="M11 4h5v7h-5z" fill="#484848"/><path d="M13 11l5 5M18 11l-5 5M12 13h7" stroke="#b33"/>',
  hyperRound: '<circle cx="10" cy="10" r="9" fill="#dde4ea"/>' + shapes,
  paint: '<circle cx="8" cy="12" r="7.500" fill="url(#gGray)"/><path d="M2 10c3-5 12-3 9 1s-6 2-4-1" fill="none" stroke="#b02838" stroke-width="2"/><path d="M9 11l10-10" stroke="#c89858" stroke-width="1.500"/>',

  arrow: '<path d="M6 2v14l4-3 3 5 2-1-3-5h5z" fill="#b01c24" stroke="#f0d8d8"/>',
  lasso: '<path d="M11 16C2 20 2 12 4 10S1 2 7 2s9 0 9 5" fill="none" stroke="#ccc" stroke-dasharray="3 2"/>' + '<path d="M9 6v11l3-2 2 4 2-1-2-4h4z" fill="#b01c24" stroke="#f0d8d8" stroke-width=".7"/>',
  brush: '<ellipse cx="9" cy="13" rx="7" ry="4" fill="none" stroke="#c22" stroke-width="1.500"/><path d="M3 10h3v3H3zM5 15h3v3H5zM13 11h3v3h-3z" fill="#e8d860"/><path d="M18 2L8 12" stroke="#b87838" stroke-width="2"/><path d="M6 15l3-6 3 2z" fill="#ddd"/>',
  move: '<path d="M2 3l6 12M5 2l6 12M8 1l5 10" stroke="#665" stroke-width="1.500"/><path d="M14 2l5 11q-4 4-9 0z" fill="#4a9ad8"/><path d="M1 11l9 4v-2l5 6-8 0 1-2-7-4z" fill="#c8282c"/>',
  rotate: '<circle cx="10" cy="7" r="6.500" fill="url(#gBlue)"/><path d="M2 9c-2 5 4 9 10 8M18 9c2 4-2 7-6 7" fill="none" stroke="#c8282c" stroke-width="2"/><path d="M8 13l6 3-4 4z" fill="#d83038"/>',
  scale: '<path d="M2 2l16 16M18 2L2 18" stroke="#c8282c" stroke-width="2"/><path d="M1 1h6L1 7zM19 1v6l-6-6zM1 19v-6l6 6zM19 19h-6l6-6z" fill="#c8282c"/><path d="M5 7l6-2 4 2v6l-5 2-5-2z" fill="#6ab0e8"/><path d="M5 7l5 2 5-2M10 9v6" stroke="#258" fill="none"/>',
  manip: '<path d="M2 5l8-4 8 4v10l-8 4-8-4zM2 5l8 3 8-3M10 8v11" fill="none" stroke="#ccc" stroke-width="1.200"/><circle cx="10" cy="11" r="3.500" fill="url(#gBlue)"/><path d="M10 3v5" stroke="#2c3" stroke-width="2"/><path d="M14 15l4 1" stroke="#d22" stroke-width="2"/><path d="M6 15l-4 1" stroke="#22d" stroke-width="2"/><path d="M1 4h2v2H1zM17 4h2v2h-2zM9 0h2v2H9zM9 18h2v2H9z" fill="#ee6"/>',
  soft: '<path d="M1 12l5-2 4 2 4-2 5 5-5 3-5-1-6 1z" fill="#78b4e0"/><path d="M4 11l11 6M14 10l-8 8" stroke="#246"/><path d="M10 1v6" stroke="#c22" stroke-width="2"/><path d="M10 7v5" stroke="#ee6" stroke-width="2"/>',
  axes: '<path d="M10 11V3" stroke="#2b3" stroke-width="2"/><path d="M7 5l3-4 3 4z" fill="#2c3"/><path d="M10 11l6 4" stroke="#c22" stroke-width="2"/><path d="M14 17l2-5 4 5z" fill="#d33"/><path d="M9 11H3" stroke="#228" stroke-width="2"/><path d="M1 13l1-5 4 4z" fill="#33c"/><circle cx="10" cy="11" r="3" fill="url(#gBlue)"/>',
  blank: '',
  persp: '<rect width="20" height="20" fill="url(#gBtn)"/>' + grid + tripod,
  four: '<rect width="20" height="20" fill="url(#gBtn)"/><path d="M10 0v20M0 10h20" stroke="#222"/><path d="M5 2v6M2 5h6M5 12v6M2 15h6M15 12v6M12 15h6M11 5l4-3 4 3-4 3zM13 3.500l4 3M17 3.500l-4 3" fill="none" stroke="#222"/>',
  outl: '<path d="M0 0h10v20H0z" fill="#303030"/><path d="M10 0h10v20H10z" fill="url(#gBtn)"/><path d="M2 3h6M2 5h6M2 7h6M2 9h6M2 11h6M2 13h6" stroke="#bbb" stroke-dasharray="1 1 4"/><path d="M11 9l4-3 4 3-4 3zM13 7l4 3" fill="none" stroke="#222"/><path d="M12 18l3-2" stroke="#22d"/>',
  graph: '<rect width="20" height="20" fill="url(#gBtn)"/><path d="M3 5l7-4 7 4-7 4zM7 3l7 4M13 3L7 7" fill="none" stroke="#333"/><path d="M0 10h20M6 15c2-6 5-4 6 0s4 3 6-1" fill="none" stroke="#333"/><path d="M8 10v10M2 12v7" stroke="#d22"/>',
  hyperP: '<path d="M0 0h10v20H0z" fill="#303030"/><path d="M10 0h10v20H10z" fill="url(#gBtn)"/><path d="M5 1v6M8 1v6" stroke="#d55" stroke-width="2" stroke-dasharray="2 1"/><path d="M4 8h5M4 13h4v4H4z" fill="none" stroke="#3b5"/><path d="M11 9l4-3 4 3-4 3z" fill="none" stroke="#222"/><path d="M1 0v20" stroke="#888"/>',
  mel: '<rect width="20" height="20" rx="2" fill="#222" stroke="#555"/><path d="M7 17C2 10 5 3 10 3s8 8 5 13-6-1-3-5-3-4-5 1M8 5l4 6M12 12c2-2 4 0 2 3" fill="none" stroke="#ccc" stroke-width="1.200"/>',

  cam, camAttr: cam + '<path d="M11 8h8v11h-8z" fill="#ddd"/><path d="M12 11h6M12 14h6M12 17h6" stroke="#333"/>',
  bookmark: tile + '<path d="M11 2h7v15l-3-3-4 3z" fill="#2a9a3a"/>', imgPlane: '<path d="M3 9l10-7 6 3-7 13-10-2z" fill="#5b8f50" stroke="#ddd"/><path d="M6 13l8-6" stroke="#68c" stroke-width="3"/>',
  pan: '<path d="M8 10V1M3 5h10" stroke="#d22" stroke-width="2.500"/><circle cx="14" cy="8" r="3.500" fill="#eee" stroke="#c22"/><path d="M11 11l-5 8" stroke="#aaa" stroke-width="2"/>',
  gridI: '<path d="M1 10l9-6 9 6-9 6zM5 7l9 6M15 7l-9 6" fill="none" stroke="#9cc4e8"/>',
  film: tile + '<path d="M1 4h18M1 16h18" stroke="#222" stroke-width="4"/><path d="M3 4h15M3 16h15" stroke="#ddd" stroke-width="2" stroke-dasharray="2 2"/><path d="M4 8h12v4H4z" fill="#79b"/>', ballBox: tile + ball('gBlue', 6), gate: tile + '<rect x="3" y="4" width="14" height="12" fill="#888"/><circle cx="10" cy="10" r="4" fill="#ccc"/>',
  xbox: tile + '<path d="M3 4l14 12M17 4L3 16M5 5h10v10H5z" fill="none" stroke="#222"/>', pts: tile + '<path d="M5 6h3M11 9h3M6 13h3M14 14h3" stroke="#286a94" stroke-width="3"/>', tbox: tile + '<path d="M5 6h10M10 6v10" stroke="#262" stroke-width="2"/>',
  wire: cube('none', '#bbb'), cubeB: cube('#5c9cdc', '#357'), cubeW: cube('#bcd8f4', '#468'),
  checker: '<circle cx="10" cy="10" r="8" fill="#eee"/><path d="M7 2h5v4H7zM2 7h5v5H2zM12 7h5v5h-5zM7 12h5v5H7z" fill="#111"/>',
  yel: ball('gYel', 9), gray: ball('gGray', 8), gold: ball('gGold', 8),
  selGreen: '<path d="M2 3h14v10H2z" fill="none" stroke="#3b4" stroke-dasharray="3 2" stroke-width="1.500"/>' + ptr(10, 7),
  cubeO: '<rect width="20" height="20" fill="#252525"/>' + cube('none', '#ddd'), twoBox: '<rect width="20" height="20" fill="#252525"/><path d="M3 7h10v10H3zM7 3h10v10H7z" fill="none" stroke="#ccc"/>', share: '<rect width="20" height="20" fill="#252525"/><path d="M16 5L6 10l10 5" stroke="#ddd" stroke-width="2" fill="none"/><circle cx="5" cy="10" r="3" fill="#ddd"/><circle cx="16" cy="5" r="2.500" fill="#ddd"/><circle cx="16" cy="15" r="2.500" fill="#ddd"/>',

  p1: P('M2 4h2v12H2zM11 6v8l-6-4zM18 6v8l-6-4z'), p2: P('M4 4h2v12H4zM15 5v10l-8-5z'),
  p3: '<path d="M4 3h2v14H4z" fill="#b84858"/>' + P('M15 5v10l-8-5z'), p4: P('M15 4v12L5 10z'), p5: P('M5 4v12l10-6z'),
  p6: P('M5 5v10l8-5z') + '<path d="M14 3h2v14h-2z" fill="#b84858"/>', p7: P('M5 5v10l8-5zM14 4h2v12h-2z'), p8: P('M2 6v8l6-4zM9 6v8l6-4zM16 4h2v12h-2z'),
  key: '<rect y="2" width="20" height="16" fill="#863a4c" stroke="#888"/><circle cx="6" cy="10" r="2.500" fill="none" stroke="#ccc"/><path d="M8 10h9v3M14 10v3" fill="none" stroke="#ccc"/>',
  prefs: '<rect x="3" y="2" width="14" height="16" fill="#eee"/><rect x="3" y="2" width="14" height="3" fill="#48a"/><path d="M5 12h3l5-5v8M14 8l2 1M7 9l6 5" stroke="#d33" stroke-width="2" fill="none"/>',
  script: '<rect x="1" y="2" width="18" height="17" fill="#ccc"/><rect x="1" y="2" width="18" height="4" fill="#48a"/><path d="M4 9h12v3H4zM4 14h12v3H4z" fill="#555"/>'
};

const spacers = {
  sep: '<i class="sep"></i>', sepn: '<i class="sep narrow"></i>', gap: '<i class="gap"></i>', chev: '<i class="chev"></i>',
  tri: '<i class="tri"><i class="down"></i></i>', trin: '<i class="tri small"><i class="down"></i></i>'
};
document.querySelectorAll('[data-icons]').forEach((bar) => {
  bar.innerHTML = bar.dataset.icons.split(' ').map((token) => {
    if (spacers[token]) return spacers[token];
    const cls = token[0] === '*' ? 'on' : token[0] === '+' ? 'hot' : '';
    const name = token.replace(/^[*+]/, '');
    return `<button class="${cls}" aria-label="${name}"><svg viewBox="0 0 20 20">${icons[name]}</svg></button>`;
  }).join('');
});

const ruler = document.getElementById('ruler');
for (let f = 0; f <= 220; f += 10) ruler.insertAdjacentHTML('beforeend', `<span>${f}</span>`);
ruler.insertAdjacentHTML('beforeend', `<span>2</span><b style="left:${91 / 231 * 100}%">91</b>`);

/* Viewport drawing */
const line = (d, color, w = 1, extra = '') => `<path d="${d}" fill="none" stroke="${color}" stroke-width="${w}" ${extra}/>`;
const X0 = 437.5, Y0 = 304.5, STEP = 14.55;
let v = '', h = '';
for (let i = -45; i <= 45; i++) {
  const x = Math.round(X0 + i * STEP) + 0.5;
  if (i) v += `M${x} 246V617`;
  const y = Math.round(Y0 + i * STEP) + 0.5;
  if (i && y > 245) h += `M-200 ${y}H1300`;
}
let out = '<rect x="-200" y="151" width="1500" height="466" fill="url(#gSky)"/>';
out += line(v + h, '#a9b4ba', 1, 'opacity=".6" mask="url(#mFade)"');
out += line('M-200 304.500H1300M437.500 151V617', '#05080a', 2);

/* Smooth interpolation through a list of points */
function smooth(pts, n) {
  const res = [];
  for (let i = 0; i < pts.length - 1; i++) {
    const p = [pts[i - 1] || pts[i], pts[i], pts[i + 1], pts[i + 2] || pts[i + 1]];
    for (let k = 0; k < n; k++) {
      const t = k / n;
      res.push(p[0].map((_, c) => 0.5 * (2 * p[1][c] + (p[2][c] - p[0][c]) * t
        + (2 * p[0][c] - 5 * p[1][c] + 4 * p[2][c] - p[3][c]) * t * t
        + (3 * p[1][c] - p[0][c] - 3 * p[2][c] + p[3][c]) * t * t * t)));
    }
  }
  res.push(pts[pts.length - 1]);
  return res;
}
const pathOf = (pts) => 'M' + pts.map((p) => p.map((q) => q.toFixed(1)).join(' ')).join('L');
const navy = '#0a0a86';
/* Strip of quads: each point is x, y, width */
function ribbon(pts, rows = 1) {
  const s = smooth(pts, 7);
  const side = (k) => s.map((p, i) => {
    const a = s[Math.max(0, i - 1)], b = s[Math.min(s.length - 1, i + 1)];
    const dx = b[0] - a[0], dy = b[1] - a[1], l = Math.hypot(dx, dy) || 1;
    return [p[0] - dy / l * p[2] * k / 2, p[1] + dx / l * p[2] * k / 2];
  });
  let d = '';
  for (let r = 0; r <= rows; r++) d += pathOf(side(-1 + 2 * r / rows));
  const a = side(-1), b = side(1);
  a.forEach((p, i) => { d += pathOf([p, b[i]]); });
  return line(d, navy, 0.8);
}
/* Body surface: each station is x, top, bottom */
function surface(st, rows, n) {
  const s = smooth(st, n);
  let d = '';
  for (let r = 0; r <= rows; r++) {
    const t = r / rows;
    d += pathOf(s.map((p, i) => [p[0], p[1] + (p[2] - p[1]) * t + (r && r < rows ? Math.sin(i * 0.9 + r * 2.1) * 1.1 : 0)]));
  }
  s.forEach((p, i) => {
    const m = (p[1] + p[2]) / 2;
    d += pathOf([[p[0], p[1]], [p[0] + Math.sin(i * 1.7) * 1.5, (p[1] + m) / 2], [p[0] + Math.sin(i) * 1.5, m], [p[0], p[2]]]);
  });
  return line(d, navy, 0.85);
}
out += surface([[241, 289, 318], [247, 284, 321], [277, 278, 323], [300, 277, 323], [330, 283, 323], [345, 284, 322], [358, 279, 324], [376, 277, 324], [393, 275, 325], [410, 278, 326], [430, 280, 327], [439, 281, 328], [455, 288, 328], [467, 292, 319], [473, 297, 309]], 17, 7);
out += surface([[345, 285, 322], [360, 284, 322], [380, 283, 323], [395, 280, 325], [410, 280, 326], [425, 280, 328], [445, 286, 328]], 19, 11);
out += '<path d="M372 288q12-6 24-7 12 3 24-1 10 0 18 2l1 45-20 0q-14-3-26-4-16 2-22-8-6-16 1-27z" fill="#08087c" opacity=".6"/>';
out += surface([[393, 323, 325], [402, 323, 334], [410, 323, 340], [420, 323, 342], [430, 323, 340], [434, 323, 326]], 5, 3);
out += surface([[414, 282, 283], [422, 277, 285], [430, 276, 285], [438, 279, 286]], 4, 3);
out += surface([[212, 306, 312], [216, 302, 325], [220, 300, 332], [225, 294, 336]], 7, 3);
out += surface([[222, 296, 336], [229, 291, 336], [237, 290, 334], [240, 288, 325], [243, 287, 318]], 10, 5);
out += surface([[445, 286, 328], [454, 289, 327], [462, 291, 323], [470, 294, 314]], 13, 5);
out += ribbon([[242, 222, 1], [243, 205, 2], [250, 201, 4], [265, 204, 4], [290, 217, 4], [315, 234, 3], [340, 252, 1], [353, 261, 3], [366, 277, 5]]);
out += ribbon([[345, 322, 3], [320, 333, 4], [295, 347, 5], [278, 361, 4], [271, 374, 3], [276, 386, 3], [293, 394, 1], [304, 388, 1]]);
out += ribbon([[360, 324, 3], [338, 338, 5], [320, 355, 5], [300, 367, 4], [271, 374, 2]]);
out += ribbon([[270, 236, 6], [266, 241, 6], [264, 249, 4], [275, 257, 5], [290, 267, 9], [310, 277, 9], [330, 284, 7]], 3);
out += ribbon([[262, 248, 1], [270, 254, 4], [285, 268, 10], [300, 278, 14]], 5);
out += ribbon([[245, 254, 5], [260, 261, 7], [275, 267, 8], [290, 278, 9]], 3);
out += ribbon([[242, 265, 5], [255, 267, 6], [272, 271, 7], [288, 281, 8]], 2);
out += ribbon([[228, 285, 4], [231, 275, 5], [240, 272, 6], [252, 275, 6], [268, 283, 8]], 2);
out += line('M234 275q4 10 10 13M240 272q5 8 12 4M266 249q10-6 17 2M280 268L340 284M275 262L330 282', navy);
out += '<circle cx="438.500" cy="304.500" r="97" fill="none" stroke="#12127a"/>';

/* Light gizmos */
const red = '#b5442c';
out += line('M543 151L480 205l12-6 4-6-5 0zM567 154L479 231l17-7 7-17-9 2-8 13zM564 158L500 211l-7 11M582 164L503 232l14-7 2-7-6 1zM277 151l13 15-2-6-4-9M281 151l9 13M291 151l11 22-9-13 3-2M296 189l-11-16 5-2zM284 151l12 38M312 151l9 15-5-12', red);
const mint = '#3fdc9c';
out += line('M542 581L475 470M458 443l18 25-4 6zM588 559L522 447M504 420l17 25-5 4zM570 591L492 467M567 578L496 462M482 439l25 22-17 9zM482 439l17 42-9-12M490 469l8 14 8-2-12-16', mint);
out += line('M526 508.500H574', '#b22832', 2) + line('M525.500 513V553', '#4444d8', 2);
out += '<path d="M572 503h5v5h-5zM524 551h5v5h-5z" fill="#888"/>';
out += line('M521 500.500h-4.500v16h16V500.500h-4', '#d8d820') + line('M520.500 501.500h7v7h-7z', '#eee', 1.5);
out += '<path d="M525 504l1 10 2-2 3 4 2-1-2-4 3-1z" fill="#fff" stroke="#333" stroke-width=".5"/>';
out += '<path d="M465 606h16v4h-16z" fill="#064a30" opacity=".8"/>';
out += '<text x="119" y="594" fill="#1ee01e">y</text><text x="131" y="595" fill="#b01818">x</text><text x="119" y="609" fill="#1414d0">z</text>' + line('M121 598.500h11', '#801818');
document.getElementById('scene').innerHTML = out;
```
